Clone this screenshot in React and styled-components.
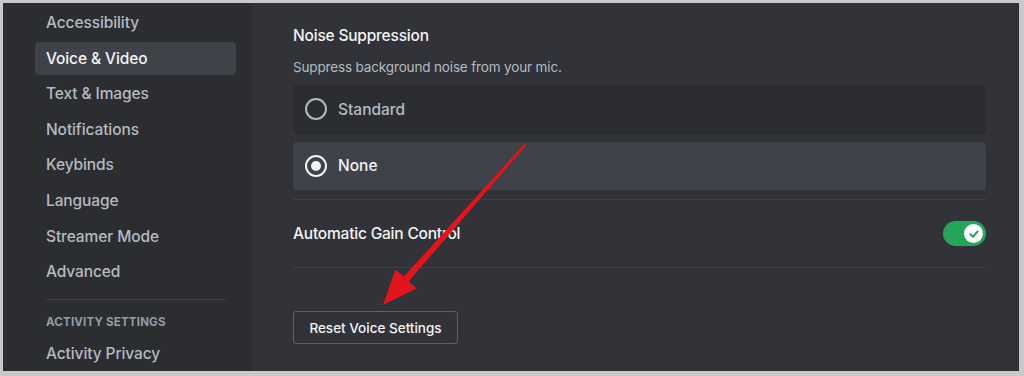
import React, { useState } from 'react'
import styled, { createGlobalStyle } from 'styled-components'

const GlobalStyle = createGlobalStyle`
  html, body {
    margin: 0;
    padding: 0;
    background: #c9c9c9;
  }
  * {
    box-sizing: border-box;
  }
`

const navItems = [
  'Accessibility',
  'Voice & Video',
  'Text & Images',
  'Notifications',
  'Keybinds',
  'Language',
  'Streamer Mode',
  'Advanced',
]

const options = [
  { id: 'standard', label: 'Standard' },
  { id: 'none', label: 'None' },
]

// red annotation arrow that points at the reset button
const Arrow = () => (
  <ArrowSvg width="1024" height="376" viewBox="0 0 1024 376">
    <polygon points="524.2,144 525.8,146 408.5,281.5 403.5,277" fill="#e3141b" />
    <polygon points="383,305 395.5,269.5 416.5,288.5" fill="#e3141b" />
  </ArrowSvg>
)

const App = () => {
  // Voice & Video is the open page
  const [active, setActive] = useState('Voice & Video')
  const [noise, setNoise] = useState('none')
  const [gain, setGain] = useState(true)

  return (
    <>
      <GlobalStyle />
      <Frame>
        <Sidebar>
          {navItems.map((item) => (
            <NavItem key={item} $active={active === item} onClick={() => setActive(item)}>
              {item}
            </NavItem>
          ))}
          <SideDivider />
          <SectionHeader>Activity Settings</SectionHeader>
          <NavItem $active={active === 'Activity Privacy'} onClick={() => setActive('Activity Privacy')}>
            Activity Privacy
          </NavItem>
        </Sidebar>

        <Main>
          <Title>Noise Suppression</Title>
          <Description>Suppress background noise from your mic.</Description>
          <RadioGroup>
            {options.map((opt) => (
              <RadioCard key={opt.id} $selected={noise === opt.id} onClick={() => setNoise(opt.id)}>
                <RadioCircle $selected={noise === opt.id} />
                {opt.label}
              </RadioCard>
            ))}
          </RadioGroup>

          <Divider $gap={9} />
          <ToggleRow>
            <RowLabel>Automatic Gain Control</RowLabel>
            <Toggle $on={gain} onClick={() => setGain(!gain)}>
              <Knob $on={gain}>
                {gain ? (
                  <svg width="12" height="12" viewBox="0 0 12 12">
                    <path d="M2.3 6.2 L4.9 8.7 L9.7 3.5" fill="none" stroke="#23a55a" strokeWidth="2" strokeLinecap="round" strokeLinejoin="round" />
                  </svg>
                ) : null}
              </Knob>
            </Toggle>
          </ToggleRow>
          <Divider $gap={0} />

          <ResetButton>Reset Voice Settings</ResetButton>
        </Main>

        <Arrow />
      </Frame>
    </>
  )
}

const Frame = styled.div`
  position: relative;
  width: 1024px;
  height: 376px;
  display: flex;
  overflow: hidden;
  border-style: solid;
  border-color: #c9c9c9;
  border-width: 3px 5px 5px 3px;
  font-family: Inter, 'Noto Sans', sans-serif;
`

const Sidebar = styled.nav`
  width: 249px;
  flex-shrink: 0;
  background: #2b2d31;
  padding: 3px 16px 0 32px;
  display: flex;
  flex-direction: column;
  gap: 2.6px;
`

const NavItem = styled.div`
  height: 33px;
  flex-shrink: 0;
  display: flex;
  align-items: center;
  padding: 0 11px;
  border-radius: 4px;
  font-size: 15.5px;
  font-weight: 500;
  letter-spacing: -0.1px;
  cursor: pointer;
  color: ${(p) => (p.$active ? '#f2f3f5' : '#b5bac1')};
  background: ${(p) => (p.$active ? '#404249' : 'transparent')};
`

const SideDivider = styled.div`
  height: 1px;
  flex-shrink: 0;
  margin: 8px 10px 12px 11px;
  background: #3f4147;
`

const SectionHeader = styled.div`
  padding: 0 11px;
  height: 16px;
  margin-bottom: 4px;
  font-size: 11.5px;
  font-weight: 700;
  line-height: 16px;
  letter-spacing: 0.2px;
  text-transform: uppercase;
  color: #949ba4;
`

const Main = styled.main`
  flex: 1;
  background: #313338;
  padding: 23px 33px 0 41px;
  display: flex;
  flex-direction: column;
  align-items: flex-start;
`

const Title = styled.h2`
  margin: 0 0 12px;
  font-size: 15.5px;
  line-height: 20px;
  font-weight: 500;
  letter-spacing: -0.2px;
  color: #f2f3f5;
`

const Description = styled.p`
  margin: 0 0 9px;
  font-size: 13.5px;
  line-height: 18px;
  letter-spacing: -0.15px;
  color: #b5bac1;
`

const RadioGroup = styled.div`
  align-self: stretch;
  display: flex;
  flex-direction: column;
  gap: 8px;
`

const RadioCard = styled.div`
  height: 48.5px;
  display: flex;
  align-items: center;
  gap: 11px;
  padding: 0 12px;
  border-radius: 4px;
  cursor: pointer;
  font-size: 15.5px;
  font-weight: 500;
  color: ${(p) => (p.$selected ? '#f2f3f5' : '#b5bac1')};
  background: ${(p) => (p.$selected ? '#404249' : '#2b2d31')};
`

const RadioCircle = styled.span`
  width: 22px;
  height: 22px;
  border-radius: 50%;
  flex-shrink: 0;
  border: 2px solid ${(p) => (p.$selected ? '#f2f3f5' : '#b5bac1')};
  display: flex;
  align-items: center;
  justify-content: center;
  &::after {
    content: '';
    width: 10px;
    height: 10px;
    border-radius: 50%;
    background: #f2f3f5;
    display: ${(p) => (p.$selected ? 'block' : 'none')};
  }
`

const Divider = styled.div`
  align-self: stretch;
  height: 1px;
  margin-top: ${(p) => p.$gap}px;
  background: #3f4147;
`

const ToggleRow = styled.div`
  align-self: stretch;
  height: 67px;
  display: flex;
  align-items: center;
  justify-content: space-between;
`

const RowLabel = styled.span`
  font-size: 15.5px;
  font-weight: 500;
  letter-spacing: -0.2px;
  color: #f2f3f5;
`

const Toggle = styled.div`
  width: 43px;
  height: 25px;
  border-radius: 13px;
  padding: 3px;
  cursor: pointer;
  display: flex;
  justify-content: ${(p) => (p.$on ? 'flex-end' : 'flex-start')};
  background: ${(p) => (p.$on ? '#23a55a' : '#80848e')};
`

const Knob = styled.span`
  width: 19px;
  height: 19px;
  border-radius: 50%;
  background: #fff;
  display: flex;
  align-items: center;
  justify-content: center;
`

const ResetButton = styled.button`
  margin-top: 43px;
  width: 165px;
  height: 33px;
  border-radius: 3px;
  border: 1px solid #b23d44;
  background: transparent;
  font-family: inherit;
  font-size: 13.5px;
  font-weight: 500;
  color: #f2f3f5;
  cursor: pointer;
`

const ArrowSvg = styled.svg`
  position: absolute;
  top: -3px;
  left: -3px;
  pointer-events: none;
`

export default App
